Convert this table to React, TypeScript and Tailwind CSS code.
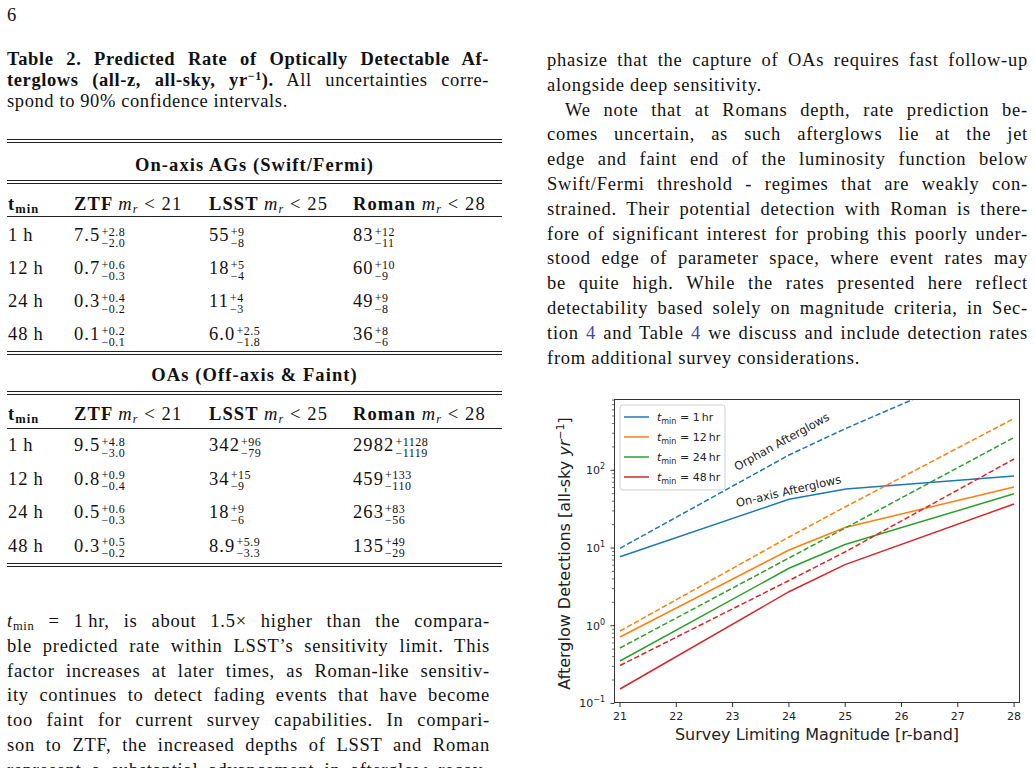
import React from "react";

/**
 * Paper page: Table 2 (afterglow rates) on the left, text + rate plot on the right.
 */

const SERIF = "font-['Liberation_Serif','Times_New_Roman',serif]";

type Val = [string, string, string];
type Row = [string, Val, Val, Val];

const onAxis: Row[] = [
  ["1\u2009h", ["7.5", "+2.8", "−2.0"], ["55", "+9", "−8"], ["83", "+12", "−11"]],
  ["12\u2009h", ["0.7", "+0.6", "−0.3"], ["18", "+5", "−4"], ["60", "+10", "−9"]],
  ["24\u2009h", ["0.3", "+0.4", "−0.2"], ["11", "+4", "−3"], ["49", "+9", "−8"]],
  ["48\u2009h", ["0.1", "+0.2", "−0.1"], ["6.0", "+2.5", "−1.8"], ["36", "+8", "−6"]],
];

const offAxis: Row[] = [
  ["1\u2009h", ["9.5", "+4.8", "−3.0"], ["342", "+96", "−79"], ["2982", "+1128", "−1119"]],
  ["12\u2009h", ["0.8", "+0.9", "−0.4"], ["34", "+15", "−9"], ["459", "+133", "−110"]],
  ["24\u2009h", ["0.5", "+0.6", "−0.3"], ["18", "+9", "−6"], ["263", "+83", "−56"]],
  ["48\u2009h", ["0.3", "+0.5", "−0.2"], ["8.9", "+5.9", "−3.3"], ["135", "+49", "−29"]],
];

function Line({ children, last, indent }: { children: React.ReactNode; last?: boolean; indent?: boolean }) {
  return (
    <div
      className={`h-[24.8px] leading-[24.8px] overflow-hidden ${
        last ? "text-left" : "text-justify [text-align-last:justify]"
      } ${indent ? "pl-[18px]" : ""}`}
    >
      {children}
    </div>
  );
}

function Value({ v }: { v: Val }) {
  return (
    <div className="flex items-center">
      <span className="leading-[19px]">{v[0]}</span>
      <span className="relative top-[2px] flex flex-col text-[12px] leading-[11px] tracking-[0.5px] ml-[1px]">
        <span>{v[1]}</span>
        <span>{v[2]}</span>
      </span>
    </div>
  );
}

function Mr() {
  return (
    <span className="font-normal">
      <span className="italic">m</span>
      <sub className="italic text-[12px]">r</sub>
    </span>
  );
}

function Header({ h, pb }: { h: string; pb: string }) {
  return (
    <div className={`grid grid-cols-[66px_135px_144px_1fr] pl-[1px] items-end font-bold ${h} ${pb}`}>
      <div className="leading-[19px]">
        t<sub className="text-[12.5px]">min</sub>
      </div>
      <div className="leading-[19px]">
        ZTF <Mr /> <span className="font-normal">&lt; 21</span>
      </div>
      <div className="leading-[19px]">
        LSST <Mr /> <span className="font-normal">&lt; 25</span>
      </div>
      <div className="leading-[19px]">
        Roman <Mr /> <span className="font-normal">&lt; 28</span>
      </div>
    </div>
  );
}

function Rows({ rows, rowH }: { rows: Row[]; rowH: string }) {
  return (
    <div>
      {rows.map((r) => (
        <div key={r[0]} className={`grid grid-cols-[66px_135px_144px_1fr] pl-[1px] items-center ${rowH}`}>
          <div className="leading-[19px]">{r[0]}</div>
          <Value v={r[1]} />
          <Value v={r[2]} />
          <Value v={r[3]} />
        </div>
      ))}
    </div>
  );
}

const Double = () => <div className="h-[4px] border-y border-[#222]" />;
const Single = () => <div className="h-px bg-[#222]" />;

function Table() {
  return (
    <div className="w-[495px] mt-[27px] tracking-[1.1px]">
      <Double />
      <div className="h-[37px] pt-[8px] leading-[29px] text-center font-bold">On-axis AGs (Swift/Fermi)</div>
      <Double />
      <Header h="h-[32px]" pb="pb-[2px]" />
      <Single />
      <div className="pt-[2px]">
        <Rows rows={onAxis} rowH="h-[33px]" />
      </div>
      <Double />
      <div className="h-[36px] pt-[6px] leading-[29px] text-center font-bold">OAs (Off-axis &amp; Faint)</div>
      <Double />
      <Header h="h-[33px]" pb="pb-[4px]" />
      <Single />
      <Rows rows={offAxis} rowH="h-[33.5px]" />
      <Double />
    </div>
  );
}

// plot geometry in page pixels
const Y = (v: number) => 625.7 - 77.7 * Math.log10(v);
const X = (m: number) => 620 + (m - 21) * 56.3;

const series = [
  {
    c: "#1f77b4",
    solid: [[620, 556.7], [789, 499.3], [846, 489], [1014, 476]],
    dash: [[620, 548.3], [789, 455], [845, 428.8], [1014, 355.7]],
  },
  {
    c: "#ff7f0e",
    solid: [[620, 637], [789, 550], [845, 527.5], [1014, 487]],
    dash: [[620, 631], [789, 537], [845, 507], [1014, 418.5]],
  },
  {
    c: "#2ca02c",
    solid: [[620, 661], [789, 568.3], [845, 544.5], [1014, 493.8]],
    dash: [[620, 648], [789, 558], [845, 528.2], [1014, 437.5]],
  },
  {
    c: "#d62728",
    solid: [[620, 689], [789, 591.7], [845, 564.6], [1014, 504]],
    dash: [[620, 665.5], [789, 580.5], [845, 552], [1014, 459]],
  },
];

const pts = (p: number[][]) => p.map((q) => q.join(",")).join(" ");

function Chart() {
  const minor: number[] = [];
  for (const d of [-1, 0, 1, 2]) {
    for (let k = 2; k <= 9; k++) {
      const y = Y(k * Math.pow(10, d));
      if (y >= 399.5) minor.push(y);
    }
  }
  const major = [
    { y: Y(0.1), e: "−1" },
    { y: Y(1), e: "0" },
    { y: Y(10), e: "1" },
    { y: Y(100), e: "2" },
  ];
  const labels = ["1", "12", "24", "48"];
  return (
    <svg
      className="block mt-[22px] tracking-normal"
      width={488}
      height={360}
      viewBox="547 392 488 360"
      fontFamily="'DejaVu Sans', sans-serif"
      fill="#222"
    >
      <defs>
        <clipPath id="frame">
          <rect x={614.5} y={399.5} width={405} height={303} />
        </clipPath>
      </defs>
      <g clipPath="url(#frame)" fill="none" strokeWidth={1.5}>
        {series.map((s) => (
          <g key={s.c} stroke={s.c}>
            <polyline points={pts(s.solid)} />
            <polyline points={pts(s.dash)} strokeDasharray="5.5 2.5" />
          </g>
        ))}
      </g>
      <text x={737} y={471} fontSize={11.5} transform="rotate(-29 737 471)">
        Orphan Afterglows
      </text>
      <text x={737} y={507} fontSize={11.5} transform="rotate(-13 737 507)">
        On-axis Afterglows
      </text>
      {/* legend */}
      <rect x={620} y={405} width={105} height={85} rx={3} fill="#fff" fillOpacity={0.85} stroke="#d0d0d0" />
      {series.map((s, i) => (
        <g key={s.c}>
          <line x1={624} x2={649} y1={417 + i * 20} y2={417 + i * 20} stroke={s.c} strokeWidth={1.5} />
          <text x={657} y={421 + i * 20} fontSize={11}>
            <tspan fontStyle="italic">t</tspan>
            <tspan fontSize={8} dy={2.5}>
              min
            </tspan>
            <tspan dy={-2.5}> = {labels[i]}{"\u2009"}hr</tspan>
          </text>
        </g>
      ))}
      {/* axes frame */}
      <rect x={614.5} y={399.5} width={405} height={303} fill="none" stroke="#333" strokeWidth={1} />
      {minor.map((y) => (
        <line key={y} x1={612} x2={614.5} y1={y} y2={y} stroke="#333" strokeWidth={0.7} />
      ))}
      {major.map((m) => (
        <g key={m.e}>
          <line x1={610.5} x2={614.5} y1={m.y} y2={m.y} stroke="#333" strokeWidth={1} />
          <text x={605} y={m.y + 4} fontSize={11} textAnchor="end">
            10
            <tspan dy={-5} fontSize={8}>
              {m.e}
            </tspan>
          </text>
        </g>
      ))}
      {[21, 22, 23, 24, 25, 26, 27, 28].map((m) => (
        <g key={m}>
          <line x1={X(m)} x2={X(m)} y1={702.5} y2={707} stroke="#333" strokeWidth={1} />
          <text x={X(m)} y={720} fontSize={11} textAnchor="middle">
            {m}
          </text>
        </g>
      ))}
      <text x={817} y={740} fontSize={16} textAnchor="middle">
        Survey Limiting Magnitude [r-band]
      </text>
      <text x={570} y={553.5} fontSize={16} textAnchor="middle" transform="rotate(-90 570 553.5)">
        Afterglow Detections [all-sky <tspan fontStyle="italic">yr</tspan>
        <tspan dy={-6} fontSize={11}>
          −1
        </tspan>
        <tspan dy={6}>]</tspan>
      </text>
    </svg>
  );
}

export default function App() {
  return (
    <div
      className={`relative w-[1035px] h-[768px] overflow-hidden bg-white text-[#111] text-[18.5px] tracking-[0.75px] flex ${SERIF}`}
    >
      {/* left column */}
      <div className="w-[547px] shrink-0 pl-[7px]">
        <div className="h-[30px] leading-[30px]">6</div>
        <div className="w-[482px] mt-[19px] leading-[21px] tracking-[0.6px]">
          <div className="h-[21px] font-bold text-justify [text-align-last:justify]">
            Table 2. Predicted Rate of Optically Detectable Af-
          </div>
          <div className="h-[21px] text-justify [text-align-last:justify]">
            <span className="font-bold">
              terglows (all-z, all-sky, yr<sup className="text-[12px]">−1</sup>).
            </span>{" "}
            All uncertainties corre-
          </div>
          <div className="h-[21px]">spond to 90% confidence intervals.</div>
        </div>
        <Table />
        <div className="w-[483px] mt-[42px]">
          <Line>
            <span className="italic">t</span>
            <sub className="text-[12.5px]">min</sub> = 1{"\u2009"}hr, is about 1.5× higher than the compara-
          </Line>
          <Line>ble predicted rate within LSST’s sensitivity limit. This</Line>
          <Line>factor increases at later times, as Roman-like sensitiv-</Line>
          <Line>ity continues to detect fading events that have become</Line>
          <Line>too faint for current survey capabilities. In compari-</Line>
          <Line>son to ZTF, the increased depths of LSST and Roman</Line>
          <Line>represent a substantial advancement in afterglow recov-</Line>
        </div>
      </div>

      {/* right column */}
      <div className="w-[488px] shrink-0 pt-[48px]">
        <div className="w-[481px]">
          <Line>phasize that the capture of OAs requires fast follow-up</Line>
          <Line last>alongside deep sensitivity.</Line>
          <Line indent>We note that at Romans depth, rate prediction be-</Line>
          <Line>comes uncertain, as such afterglows lie at the jet</Line>
          <Line>edge and faint end of the luminosity function below</Line>
          <Line>Swift/Fermi threshold - regimes that are weakly con-</Line>
          <Line>strained. Their potential detection with Roman is there-</Line>
          <Line>fore of significant interest for probing this poorly under-</Line>
          <Line>stood edge of parameter space, where event rates may</Line>
          <Line>be quite high. While the rates presented here reflect</Line>
          <Line>detectability based solely on magnitude criteria, in Sec-</Line>
          <Line>
            tion <span className="text-[#4444a8]">4</span> and Table <span className="text-[#4444a8]">4</span> we
            discuss and include detection rates
          </Line>
          <Line last>from additional survey considerations.</Line>
        </div>
        <Chart />
      </div>
    </div>
  );
}
